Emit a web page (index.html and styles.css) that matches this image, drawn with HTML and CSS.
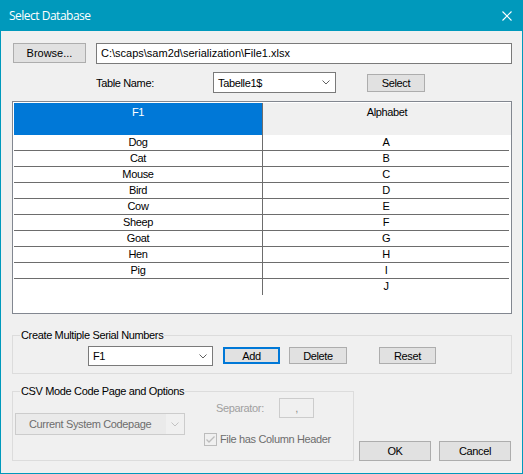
FILE: index.html
```html
<!DOCTYPE html>
<html lang="en">
<head>
    <meta charset="UTF-8">
    <title>Select Database</title>
    <link rel="stylesheet" href="styles.css">
</head>
<body>
    <div class="window">
        <div class="titlebar">
            <span class="title">Select Database</span>
            <svg class="close" width="10" height="10" viewBox="0 0 10 10">
                <path d="M0.5 0.5 L9.5 9.5 M9.5 0.5 L0.5 9.5" stroke="#fff" stroke-width="1.1" fill="none"/>
            </svg>
        </div>

        <div class="content">
            <div class="file-row">
                <button class="btn browse">Browse...</button>
                <div class="textbox path">C:\scaps\sam2d\serialization\File1.xlsx</div>
            </div>

            <div class="table-row">
                <span class="table-label">Table Name:</span>
                <div class="combo table-combo">
                    <span class="combo-text">Tabelle1$</span>
                    <svg class="chevron" width="8" height="5" viewBox="0 0 8 5"><path d="M0.5 0.5 L4 4 L7.5 0.5" stroke="#606060" fill="none"/></svg>
                </div>
                <button class="btn select">Select</button>
            </div>

            <!-- data grid -->
            <div class="grid">
                <div class="grid-head">
                    <div class="hcell selected">F1</div>
                    <div class="hcell">Alphabet</div>
                </div>
                <div class="grid-row"><div class="cell first">Dog</div><div class="cell">A</div></div>
                <div class="grid-row"><div class="cell first">Cat</div><div class="cell">B</div></div>
                <div class="grid-row"><div class="cell first">Mouse</div><div class="cell">C</div></div>
                <div class="grid-row"><div class="cell first">Bird</div><div class="cell">D</div></div>
                <div class="grid-row"><div class="cell first">Cow</div><div class="cell">E</div></div>
                <div class="grid-row"><div class="cell first">Sheep</div><div class="cell">F</div></div>
                <div class="grid-row"><div class="cell first">Goat</div><div class="cell">G</div></div>
                <div class="grid-row"><div class="cell first">Hen</div><div class="cell">H</div></div>
                <div class="grid-row"><div class="cell first">Pig</div><div class="cell">I</div></div>
                <div class="grid-row last"><div class="cell first"></div><div class="cell">J</div></div>
            </div>

            <fieldset class="group serial">
                <legend>Create Multiple Serial Numbers</legend>
                <div class="serial-row">
                    <div class="combo serial-combo">
                        <span class="combo-text">F1</span>
                        <svg class="chevron" width="8" height="5" viewBox="0 0 8 5"><path d="M0.5 0.5 L4 4 L7.5 0.5" stroke="#606060" fill="none"/></svg>
                    </div>
                    <button class="btn add">Add</button>
                    <button class="btn delete">Delete</button>
                    <button class="btn reset">Reset</button>
                </div>
            </fieldset>

            <div class="bottom">
                <fieldset class="group csv">
                    <legend>CSV Mode Code Page and Options</legend>
                    <div class="csv-body">
                        <div class="codepage">
                            <span class="codepage-text">Current System Codepage</span>
                            <span class="codepage-arrow">
                                <svg width="8" height="5" viewBox="0 0 8 5"><path d="M0.5 0.5 L4 4 L7.5 0.5" stroke="#c2c2c2" fill="none"/></svg>
                            </span>
                        </div>
                        <div class="csv-options">
                            <div class="sep-row">
                                <span class="sep-label">Separator:</span>
                                <div class="sep-box">,</div>
                            </div>
                            <div class="check-row">
                                <svg class="checkbox" width="13" height="13" viewBox="0 0 13 13">
                                    <rect x="0.5" y="0.5" width="12" height="12" fill="#f0f0f0" stroke="#bcbcbc"/>
                                    <path d="M2.5 6.5 L5 9 L10.5 3.5" stroke="#bcbcbc" stroke-width="1.3" fill="none"/>
                                </svg>
                                <span class="check-label">File has Column Header</span>
                            </div>
                        </div>
                    </div>
                </fieldset>
                <div class="dialog-buttons">
                    <button class="btn ok">OK</button>
                    <button class="btn cancel">Cancel</button>
                </div>
            </div>
        </div>
    </div>
</body>
</html>
```

FILE: styles.css
```css
body {
    margin: 0;
    font-family: "Liberation Sans", Arial, sans-serif;
    font-size: 11px;
    letter-spacing: -0.35px;
    color: #000;
}
.window {
    width: 521px;
    height: 473px;
    border: 1px solid #0099bc;
    border-top: none;
    background-color: #f0f0f0;
}
.titlebar {
    height: 31px;
    background-color: #0099bc;
    display: flex;
    align-items: center;
}
.title {
    padding-left: 8px;
    font-family: "Open Sans", "Liberation Sans", sans-serif;
    font-size: 12px;
    letter-spacing: -0.5px;
    color: white;
}
.close {
    margin-left: auto;
    margin-right: 10px;
}
.content {
    padding: 12px 10px 0 11px;
}
.btn {
    box-sizing: border-box;
    padding: 0;
    font-family: inherit;
    font-size: 11px;
    letter-spacing: inherit;
    color: #000;
    background-color: #e1e1e1;
    border: 1px solid #adadad;
}
.file-row {
    display: flex;
    align-items: flex-start;
}
.browse {
    margin-left: 1px;
    width: 73px;
    height: 20px;
    letter-spacing: 0;
}
.textbox {
    box-sizing: border-box;
    background-color: white;
    border: 1px solid #7a7a7a;
}
.path {
    margin-left: 10px;
    width: 416px;
    height: 21px;
    padding-left: 4px;
    line-height: 19px;
    letter-spacing: 0;
}
.table-row {
    display: flex;
    align-items: center;
    margin-top: 8px;
    height: 21px;
    padding-left: 84px;
}
.table-label {
    width: 117px;
}
.combo {
    box-sizing: border-box;
    display: flex;
    align-items: center;
    background-color: white;
    border: 1px solid #7a7a7a;
    padding-left: 4px;
}
.combo .chevron {
    margin-left: auto;
    margin-right: 5px;
}
.table-combo {
    width: 123px;
    height: 21px;
}
.select {
    margin-left: 31px;
    width: 58px;
    height: 18px;
}

/* data grid */
.grid {
    box-sizing: border-box;
    margin-top: 8px;
    width: 500px;
    height: 213px;
    padding: 1px 0 0 1px;
    background-color: white;
    border: 1px solid #828790;
}
.grid-head {
    display: flex;
    height: 32px;
}
.hcell {
    flex: 1;
    padding-top: 2px;
    line-height: 14px;
    text-align: center;
    background-color: #f0f0f0;
}
.hcell.selected {
    flex: none;
    width: 248px;
    background-color: #0078d7;
    color: white;
    border-right: 1px solid #6d6d6d;
}
.grid-row {
    box-sizing: border-box;
    display: flex;
    width: 495px;
    height: 16px;
    border-bottom: 1px solid #6d6d6d;
}
.grid-row.last {
    border-bottom: none;
}
.cell {
    flex: 1;
    line-height: 15px;
    text-align: center;
}
.cell.first {
    flex: none;
    width: 248px;
    border-right: 1px solid #6d6d6d;
}

/* group boxes */
.group {
    margin: 0;
    padding: 0;
    min-width: 0;
    border: 1px solid #dcdcdc;
}
.group legend {
    margin-left: 7px;
    padding: 0 1px;
    line-height: 14px;
}
.serial {
    margin-top: 14px;
    padding-bottom: 7px;
}
.serial-row {
    display: flex;
    align-items: flex-start;
    margin-top: 4px;
    padding-left: 75px;
}
.serial-combo {
    width: 125px;
    height: 20px;
}
.serial-row .btn {
    margin-top: 1px;
    height: 17px;
}
.add {
    margin-left: 10px;
    width: 57px;
    border: 2px solid #0078d7;
}
.delete {
    margin-left: 9px;
    width: 58px;
}
.reset {
    margin-left: 32px;
    width: 57px;
}
.bottom {
    display: flex;
    align-items: flex-end;
    margin-top: 10px;
}
.csv {
    width: 342px;
    box-sizing: border-box;
    padding-bottom: 14px;
}
.csv-body {
    display: flex;
    align-items: flex-start;
}
.codepage {
    box-sizing: border-box;
    display: flex;
    margin-left: 2px;
    margin-top: 15px;
    width: 170px;
    height: 22px;
    border: 1px solid #cccccc;
}
.codepage-text {
    flex: 1;
    padding-left: 13px;
    line-height: 20px;
    color: #6d6d6d;
    background-color: #eaeaea;
}
.codepage-arrow {
    width: 18px;
    display: flex;
    align-items: center;
    justify-content: center;
    background-color: #f0f0f0;
}
.csv-options {
    margin-left: 19px;
}
.sep-row {
    display: flex;
    align-items: center;
    padding-left: 12px;
}
.sep-label {
    width: 63px;
    color: #a0a0a0;
}
.sep-box {
    box-sizing: border-box;
    width: 35px;
    height: 20px;
    line-height: 18px;
    text-align: center;
    color: #8a8a8a;
    border: 1px solid #cccccc;
}
.check-row {
    display: flex;
    align-items: center;
    margin-top: 14px;
    height: 14px;
}
.check-label {
    margin-left: 3px;
    color: #6d6d6d;
}
.dialog-buttons {
    display: flex;
    margin-left: 5px;
}
.dialog-buttons .btn {
    width: 72px;
    height: 20px;
}
.cancel {
    margin-left: 8px;
}
```
